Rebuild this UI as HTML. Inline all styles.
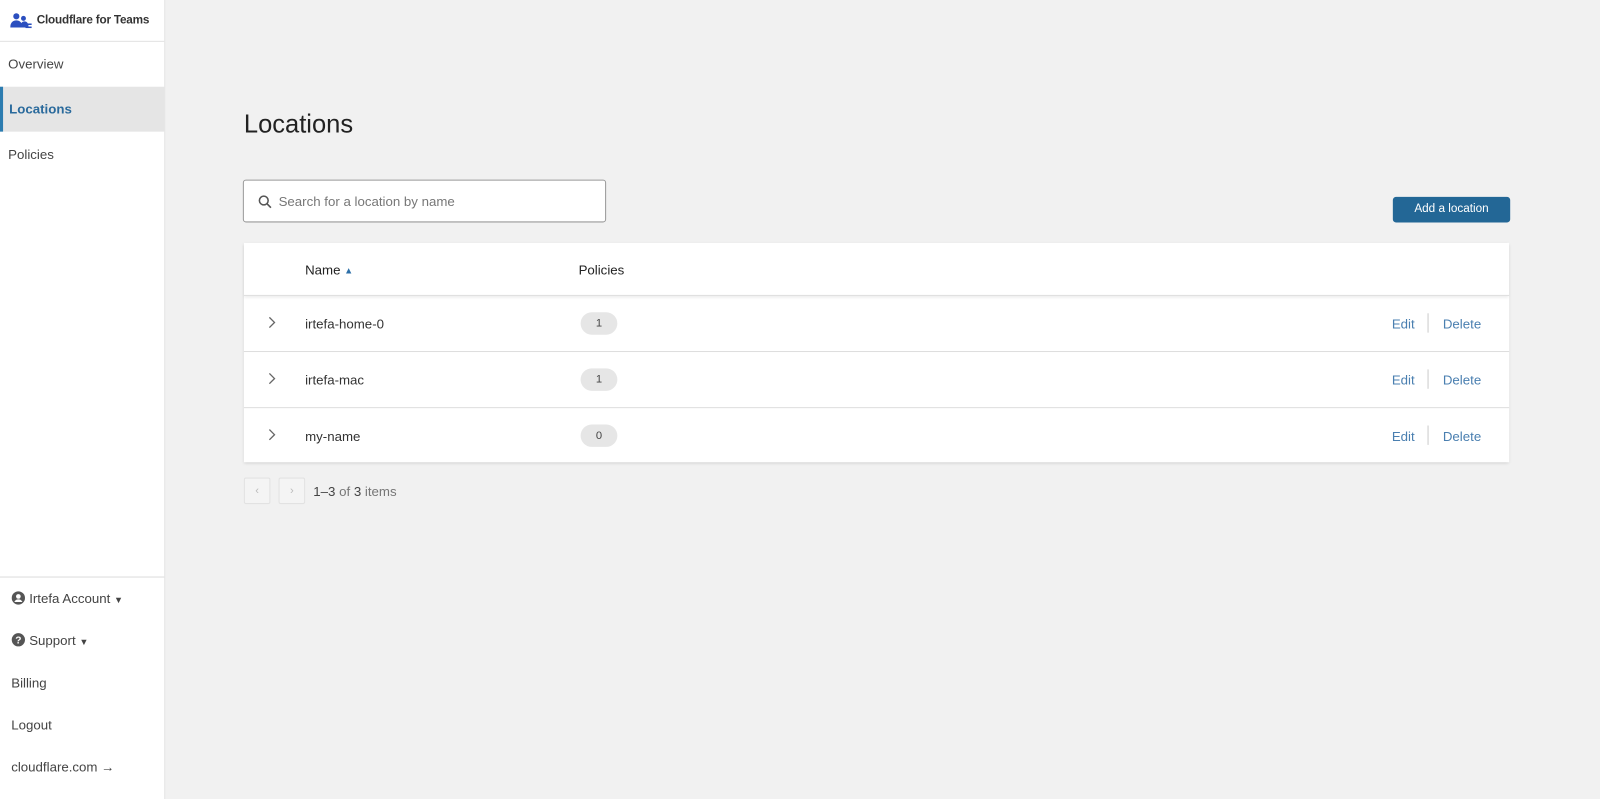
<!DOCTYPE html>
<html><head><style>
*{box-sizing:border-box;margin:0;padding:0}
body{width:1600px;height:783px;background:#f1f1f1;font-family:"Liberation Sans",sans-serif;position:relative;overflow:hidden;color:#333}
#w{position:absolute;left:0;top:0;width:1568px;height:768px;transform:scale(1.0204);transform-origin:0 0}
.sb{position:absolute;left:0;top:0;width:162px;height:783px;background:#fff;border-right:1px solid #e2e2e2}
.logo{height:41px;border-bottom:1px solid #e2e2e2;display:flex;align-items:center;padding-left:10px;font-size:11.5px;font-weight:bold;color:#333;letter-spacing:-0.2px}
.nav{position:absolute;left:0;width:161px;height:44px;line-height:44px;padding-left:8px;font-size:13px;color:#444}
.act{background:#e5e5e5;border-left:3px solid #2c7cb0;color:#2a6a9c;font-weight:bold;padding-left:6px}
.bt{position:absolute;left:11px;font-size:13px;color:#444}
h1{position:absolute;left:239px;top:108px;font-size:25px;font-weight:normal;color:#222}
.search{position:absolute;left:238px;top:176px;width:356px;height:42px;border:1px solid #999;border-radius:3px;background:#fff;font-size:13px;color:#777;padding:13px 0 0 34px}
.btn{position:absolute;left:1365px;top:193px;width:115px;height:25px;background:#236796;border-radius:3px;color:#fff;font-size:11.5px;text-align:center;line-height:25px}
.tbl{position:absolute;left:239px;top:238px;width:1240px;height:215px;background:#fff;box-shadow:0 1px 3px rgba(0,0,0,.15)}
.th{height:52px;border-bottom:1px solid #ddd;box-shadow:0 2px 3px rgba(0,0,0,.08);position:relative;font-size:13px;color:#222}
.row{height:55px;border-bottom:1px solid #ddd;position:relative;font-size:13px;color:#333}
.row:last-child{border-bottom:none}
.pill{position:absolute;left:330px;top:16px;width:36px;height:22px;border-radius:11px;background:#e6e6e6;font-size:11px;text-align:center;line-height:22px;color:#444}
.ed{position:absolute;left:1125px;top:20px;color:#4a7fb0}
.sep{position:absolute;left:1160px;top:17px;width:1px;height:19px;background:#ccc}
.de{position:absolute;left:1175px;top:20px;color:#4a7fb0}
.chev{position:absolute;left:22px;top:19px}
.pg{position:absolute;top:468px;width:26px;height:26px;border:1px solid #e2e2e2;background:#f4f4f4;border-radius:2px;font-size:11px;color:#bbb;text-align:center;line-height:24px}
</style></head><body><div id="w">
<div class="sb">
<div class="logo"><svg width="22" height="16" viewBox="0 0 22 16" style="margin-right:4px"><circle cx="6" cy="4" r="3" fill="#2b4fbf"/><circle cx="13" cy="6" r="2.4" fill="#2b4fbf"/><path d="M0 15c0-5 3-7 6-7s6 2 6 7z" fill="#2b4fbf"/><path d="M10 15c0-4 1.5-6 4-6s4 2 4 6z" fill="#2b4fbf"/><rect x="15" y="11" width="6" height="1.5" fill="#2b4fbf"/><rect x="15" y="14" width="6" height="1.5" fill="#2b4fbf"/></svg>Cloudflare for Teams</div>
<div class="nav" style="top:41px">Overview</div>
<div class="nav act" style="top:85px">Locations</div>
<div class="nav" style="top:130px">Policies</div>
<div style="position:absolute;left:0;top:565px;width:161px;border-top:1px solid #ddd"></div>
<div class="bt" style="top:579px"><svg width="14" height="14" viewBox="0 0 14 14" style="vertical-align:-2px"><circle cx="7" cy="7" r="6.5" fill="#555"/><circle cx="7" cy="5.5" r="2.3" fill="#fff"/><path d="M3 11c1-2 2.5-2.6 4-2.6s3 .6 4 2.6" fill="#fff"/></svg> Irtefa Account <span style="font-size:9px">▼</span></div>
<div class="bt" style="top:620px"><svg width="14" height="14" viewBox="0 0 14 14" style="vertical-align:-2px"><circle cx="7" cy="7" r="6.5" fill="#555"/><text x="7" y="10.5" font-size="10" font-weight="bold" text-anchor="middle" fill="#fff" font-family="Liberation Sans">?</text></svg> Support <span style="font-size:9px">▼</span></div>
<div class="bt" style="top:662px">Billing</div>
<div class="bt" style="top:703px">Logout</div>
<div class="bt" style="top:744px">cloudflare.com →</div>
</div>
<h1>Locations</h1>
<div class="search"><svg width="14" height="14" viewBox="0 0 14 14" style="position:absolute;left:14px;top:14px"><circle cx="5.5" cy="5.5" r="4.3" fill="none" stroke="#555" stroke-width="1.5"/><path d="M8.7 8.7L12.5 12.5" stroke="#555" stroke-width="1.6"/></svg>Search for a location by name</div>
<div class="btn">Add a location</div>
<div class="tbl">
<div class="th"><span style="position:absolute;left:60px;top:19px">Name <span style="color:#2c6fa8;font-size:9px;vertical-align:1px">▲</span></span><span style="position:absolute;left:328px;top:19px">Policies</span></div>
<div class="row"><svg class="chev" width="12" height="14" viewBox="0 0 12 14"><path d="M3 2l5 5-5 5" fill="none" stroke="#666" stroke-width="1.3"/></svg><span style="position:absolute;left:60px;top:20px">irtefa-home-0</span><div class="pill">1</div><span class="ed">Edit</span><div class="sep"></div><span class="de">Delete</span></div>
<div class="row"><svg class="chev" width="12" height="14" viewBox="0 0 12 14"><path d="M3 2l5 5-5 5" fill="none" stroke="#666" stroke-width="1.3"/></svg><span style="position:absolute;left:60px;top:20px">irtefa-mac</span><div class="pill">1</div><span class="ed">Edit</span><div class="sep"></div><span class="de">Delete</span></div>
<div class="row"><svg class="chev" width="12" height="14" viewBox="0 0 12 14"><path d="M3 2l5 5-5 5" fill="none" stroke="#666" stroke-width="1.3"/></svg><span style="position:absolute;left:60px;top:20px">my-name</span><div class="pill">0</div><span class="ed">Edit</span><div class="sep"></div><span class="de">Delete</span></div>
</div>
<div class="pg" style="left:239px">‹</div>
<div class="pg" style="left:273px">›</div>
<div style="position:absolute;left:307px;top:474px;font-size:13px;color:#777"><span style="color:#444">1–3</span> of <span style="color:#444">3</span> items</div>
</div></body></html>
